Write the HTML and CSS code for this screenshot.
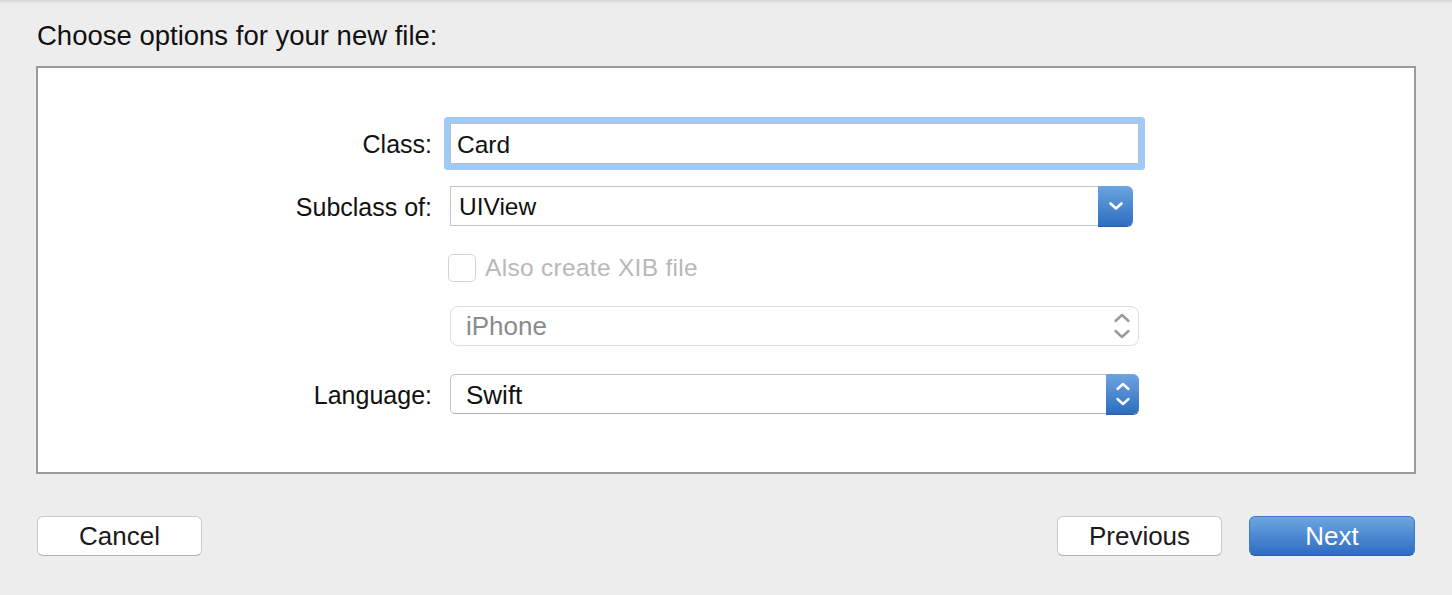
FILE: index.html
```html
<!DOCTYPE html>
<html>
<head>
<meta charset="utf-8">
<title>Choose options</title>
<link rel="stylesheet" href="styles.css">
</head>
<body>
<div class="sheet">
  <h1 class="title">Choose options for your new file:</h1>
  <div class="panel">
    <div class="row row-class">
      <span class="label">Class:</span>
      <div class="field">Card</div>
    </div>
    <div class="row row-subclass">
      <span class="label">Subclass of:</span>
      <div class="combo">
        <span class="combo-text">UIView</span>
        <span class="combo-btn">
          <svg width="16" height="10" viewBox="0 0 16 10"><path d="M2.5 2.5 L8 7.5 L13.5 2.5" fill="none" stroke="#fff" stroke-width="2.6" stroke-linecap="round" stroke-linejoin="round"/></svg>
        </span>
      </div>
    </div>
    <div class="row row-check">
      <span class="label"></span>
      <div class="check">
        <span class="check-box"></span>
        <span class="check-text">Also create XIB file</span>
      </div>
    </div>
    <div class="row row-device">
      <span class="label"></span>
      <div class="popup popup-disabled">
        <span class="popup-text">iPhone</span>
        <svg class="popup-arrows" width="18" height="28" viewBox="0 0 18 28"><path d="M2.5 9 L9 3 L15.5 9 M2.5 19 L9 25 L15.5 19" fill="none" stroke="#9a9a9a" stroke-width="2.4" stroke-linecap="round" stroke-linejoin="round"/></svg>
      </div>
    </div>
    <div class="row row-lang">
      <span class="label">Language:</span>
      <div class="popup popup-active">
        <span class="popup-text">Swift</span>
        <span class="popup-btn">
          <svg width="16" height="26" viewBox="0 0 16 26"><path d="M2.5 8 L8 3 L13.5 8 M2.5 18 L8 23 L13.5 18" fill="none" stroke="#fff" stroke-width="2.4" stroke-linecap="round" stroke-linejoin="round"/></svg>
        </span>
      </div>
    </div>
  </div>
  <div class="actions">
    <button class="btn">Cancel</button>
    <div class="actions-right">
      <button class="btn">Previous</button>
      <button class="btn btn-primary">Next</button>
    </div>
  </div>
</div>
</body>
</html>
```
FILE: styles.css
```css
html, body {
  margin: 0;
  padding: 0;
}
body {
  width: 1452px;
  height: 595px;
  overflow: hidden;
  background: linear-gradient(#d4d4d4 0, #e4e4e4 2px, #ededed 4px, #ededed 100%);
  font-family: "Liberation Sans", Arial, sans-serif;
  color: #1a1a1a;
}
.sheet {
  padding: 0 36px;
}
.title {
  margin: 0;
  padding: 20px 0 0 1px;
  font-size: 27.5px;
  line-height: 32px;
  font-weight: normal;
  color: #111;
}
.panel {
  margin-top: 14px;
  height: 408px;
  box-sizing: border-box;
  border: 2px solid #9b9b9b;
  background: #fff;
  padding-top: 55px;
  display: flex;
  flex-direction: column;
}
.row {
  display: grid;
  grid-template-columns: 394px 689px;
  column-gap: 18px;
  align-items: center;
}
.label {
  text-align: right;
  font-size: 25px;
  color: #111;
  padding-top: 2px;
}
.row-class { height: 41px; }
.row-subclass { height: 40px; margin-top: 22px; }
.row-check { height: 28px; margin-top: 28px; }
.row-device { height: 40px; margin-top: 24px; }
.row-lang { height: 40px; margin-top: 28px; }

.field {
  height: 41px;
  box-sizing: border-box;
  border: 1px solid #bdbdbd;
  border-radius: 1px;
  box-shadow: 0 0 0 6px #9fcafa;
  background: #fff;
  padding: 2px 0 0 6px;
  font-size: 24.5px;
  display: flex;
  align-items: center;
  color: #111;
}
.combo {
  width: 683px;
  height: 40px;
  display: flex;
}
.combo-text {
  flex: 1;
  box-sizing: border-box;
  border: 1px solid #c6c6c6;
  border-right: none;
  background: #fff;
  padding: 2px 0 0 8px;
  font-size: 24.5px;
  display: flex;
  align-items: center;
  color: #111;
}
.combo-btn {
  width: 35px;
  border-radius: 0 6px 6px 0;
  background: linear-gradient(#6ca5df, #2e6cc0);
  box-shadow: 0 1px 0 #2a5ea6;
  display: flex;
  align-items: center;
  justify-content: center;
}
.check {
  display: flex;
  align-items: center;
  margin-left: -2px;
}
.check-box {
  width: 28px;
  height: 28px;
  box-sizing: border-box;
  border: 1px solid #d4d4d4;
  border-radius: 5px;
  background: #fff;
}
.check-text {
  margin-left: 9px;
  font-size: 24.5px;
  letter-spacing: 0.3px;
  color: #b8b8b8;
}
.popup {
  height: 40px;
  display: flex;
  align-items: stretch;
  font-size: 26px;
}
.popup-disabled {
  box-sizing: border-box;
  border: 1px solid #dedede;
  border-radius: 8px;
  background: #fff;
  align-items: center;
  justify-content: space-between;
  padding: 0 7px 0 15px;
  color: #8b8b8b;
}
.popup-active .popup-text {
  flex: 1;
  box-sizing: border-box;
  border: 1px solid #c4c4c4;
  border-right: none;
  border-bottom-color: #b0b0b0;
  border-radius: 5px 0 0 5px;
  background: #fff;
  padding: 2px 0 0 15px;
  display: flex;
  align-items: center;
  color: #111;
}
.popup-btn {
  width: 33px;
  border-radius: 0 6px 6px 0;
  background: linear-gradient(#6ca5df, #2e6cc0);
  box-shadow: 0 1px 0 #2a5ea6;
  display: flex;
  align-items: center;
  justify-content: center;
}
.actions {
  margin-top: 42px;
  display: flex;
  justify-content: space-between;
  padding: 0 1px;
}
.actions-right {
  display: flex;
  gap: 27px;
}
.btn {
  width: 165px;
  height: 40px;
  box-sizing: border-box;
  border: 1px solid #c9c9c9;
  border-bottom-color: #b0b0b0;
  border-radius: 6px;
  background: #fff;
  font-family: "Liberation Sans", Arial, sans-serif;
  font-size: 26px;
  color: #1a1a1a;
  padding: 0;
  display: flex;
  align-items: center;
  justify-content: center;
}
.btn-primary {
  width: 166px;
  background: linear-gradient(#6ca6e0, #2e6cc1);
  border: 1px solid #3f7bc8;
  border-bottom-color: #2a5ea6;
  color: #fff;
}
```
